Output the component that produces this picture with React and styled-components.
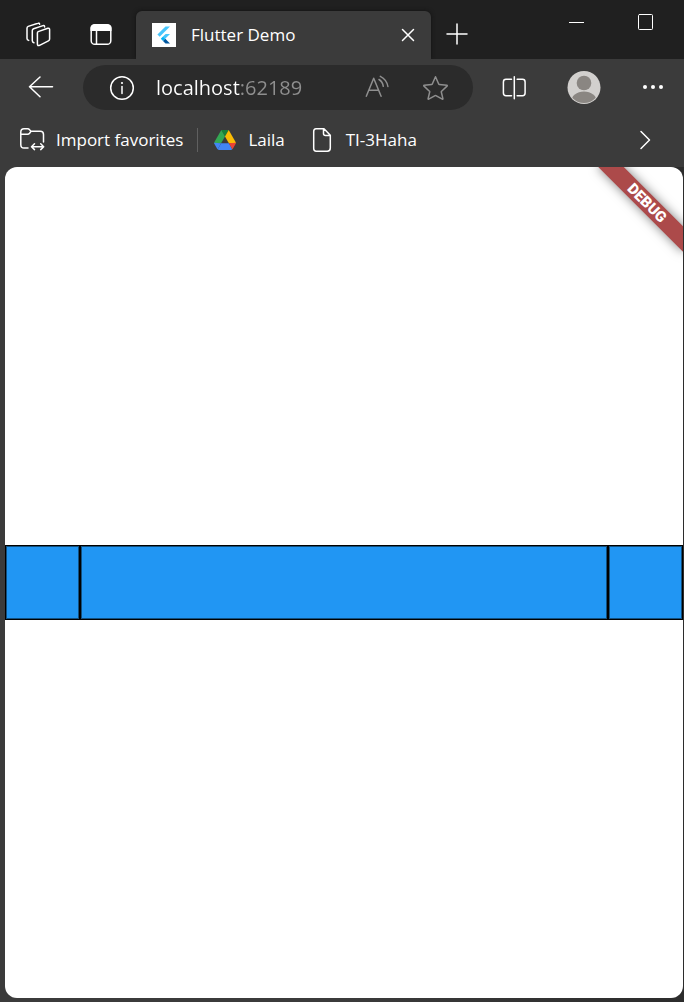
import React from "react";
import styled, { createGlobalStyle } from "styled-components";

const GlobalStyle = createGlobalStyle`
  * { box-sizing: border-box; }
  body {
    margin: 0;
    background: #3b3b3b;
    color: #fff;
    font-family: "Open Sans", "Noto Sans", sans-serif;
    font-size: 17px;
    line-height: 24px;
  }
  button, input { font: inherit; color: inherit; }
`;

const Window = styled.div`
  display: flex;
  flex-direction: column;
  min-height: 100vh;
  overflow: hidden;
`;

const TitleBar = styled.header`
  display: flex;
  align-items: flex-end;
  height: 59px;
  padding: 0 4px 0 12px;
  background: #202020;
`;

const IconButton = styled.button`
  display: flex;
  flex: none;
  align-items: center;
  justify-content: center;
  width: ${(p) => p.$width || 58}px;
  height: ${(p) => p.$height || 44}px;
  padding: 0;
  border: 0;
  background: none;
  color: ${(p) => p.$color || "#fff"};
`;

const TabActions = styled.div`
  display: flex;
  align-items: center;
  gap: 11px;
  width: 124px;
  height: 50px;
`;

const Tab = styled.div`
  position: relative;
  display: flex;
  align-items: center;
  flex: 0 1 295px;
  height: 48px;
  padding: 0 0 0 16px;
  border-radius: 6px 6px 0 0;
  background: #3b3b3b;
  box-shadow: 0 0 4px #111;
  clip-path: inset(-6px -6px 0 -6px);
`;

const TabTitle = styled.span`
  flex: 1;
  padding-left: 15px;
  white-space: nowrap;
`;

const WindowControls = styled.div`
  display: flex;
  align-self: flex-start;
  margin-left: auto;
`;

const Toolbar = styled.nav`
  display: flex;
  align-items: center;
  gap: 12px;
  height: 57px;
  padding: 0 1px 0 13px;
`;

const AddressBar = styled.label`
  display: flex;
  align-items: center;
  flex: 1;
  min-width: 0;
  height: 45px;
  padding: 0 8px 0 10px;
  border-radius: 23px;
  background: #2b2b2b;
`;

const AddressInput = styled.input`
  flex: 1;
  min-width: 0;
  height: 32px;
  margin-left: 5px;
  padding: 0;
  border: 0;
  outline: 0;
  font-size: 20px;
  color: transparent;
  background: linear-gradient(90deg, #fff 84px, #8f8f8f 84px);
  -webkit-background-clip: text;
  background-clip: text;
`;

const FavoritesBar = styled.nav`
  display: flex;
  align-items: center;
  height: 51px;
  padding: 0 10px 4px 18px;
`;

const Favorite = styled.a`
  display: flex;
  align-items: center;
  gap: ${(p) => p.$gap || 10}px;
  color: #fff;
  text-decoration: none;
  white-space: nowrap;
`;

const Divider = styled.span`
  width: 1px;
  height: 24px;
  margin: 0 16px 0 14px;
  background: #606060;
`;

const Spacer = styled.span`
  flex: ${(p) => (p.$width ? `0 0 ${p.$width}px` : "1")};
`;

const PageFrame = styled.div`
  display: flex;
  flex: 1;
  padding: 0 1px 4px 5px;
  background: linear-gradient(90deg, #3b3b3b 50%, #2c2c2c);
`;

const Page = styled.main`
  position: relative;
  display: flex;
  flex: 1;
  align-items: center;
  overflow: hidden;
  border-radius: 12px;
  background: #fff;
`;

const Strip = styled.div`
  display: flex;
  flex: 1;
`;

const Box = styled.div`
  flex: ${(p) => (p.$grow ? "1" : "0 0 75px")};
  height: 75px;
  border: 1px solid #000;
  background: #2196f3;
  box-shadow: inset 0 0 0 1px #12507f;
`;

const DebugBanner = styled.div`
  position: absolute;
  top: 27px;
  right: -24px;
  width: 120px;
  height: 18px;
  transform: rotate(45deg);
  background: #ac4a4a;
  box-shadow: 0 0 11px rgba(0, 0, 0, 0.5);
  font-family: Roboto, sans-serif;
  font-size: 15px;
  font-weight: 900;
  line-height: 18px;
  text-align: center;
`;

const Icon = ({ w = 28, h = w, sw = 1.5, children }) => (
  <svg
    width={w}
    height={h}
    viewBox={`0 0 ${w} ${h}`}
    fill="none"
    stroke="currentColor"
    strokeWidth={sw}
    strokeLinecap="round"
    strokeLinejoin="round"
    aria-hidden="true"
  >
    {children}
  </svg>
);

const WorkspacesIcon = () => (
  <Icon>
    <path d="M14.2 11.6 23.8 8.3q1.8-.5 1.8 1.2V19q0 1.3-1.2 1.9l-8.8 4.4q-2.2 1-2.2-1.2V12.9q0-1 .8-1.3Z" />
    <path d="M20.6 6.9V6.7q0-1.6-1.6-1.1L9.6 8.8Q8.3 9.3 8.3 10.6V20.8q0 1.6 1.6 2" />
    <path d="M15.6 4.2q-.3-1.4-1.7-.9L4.2 6.4Q3 6.9 3 8.2V18.4q0 1.5 1.7 2" />
  </Icon>
);

const TabMenuIcon = () => (
  <Icon>
    <rect x="4.2" y="4.7" width="19.6" height="19.6" rx="3.6" />
    <path d="M3.5 11V8q0-3.500 3.500-3.500h14q3.500 0 3.500 3.500v3Z" fill="currentColor" stroke="none" />
    <path d="M9.5 11v13" />
  </Icon>
);

const FlutterIcon = () => (
  <svg width="24" height="24" viewBox="0 0 24 24" aria-hidden="true">
    <path fill="#fff" d="M0 0h24v24H0z" />
    <path fill="#47c5fb" d="M13.500 3.500H18L7.700 13.800 5.400 11.600Z" />
    <path fill="#47c5fb" d="M13.600 11H18l-4.800 4.800-2.300-2.300Z" />
    <path fill="#00b5f8" d="m8.800 15.800 2.200-2.300 2.300 2.300-2.300 2.200Z" />
    <path fill="#00569e" d="m11 18 2.300-2.200 4.700 4.700h-4.500Z" />
  </svg>
);

const CloseIcon = () => (
  <Icon w={14}>
    <path d="m1.500 1.500 11 11M12.500 1.500l-11 11" />
  </Icon>
);

const PlusIcon = () => (
  <Icon w={22}>
    <path d="M11 1v20M1 11h20" />
  </Icon>
);

const MinimizeIcon = () => (
  <Icon w={15} h={3} sw={1}>
    <path strokeLinecap="butt" d="M0 1.500h15" />
  </Icon>
);

const MaximizeIcon = () => (
  <Icon w={15} h={16} sw={1}>
    <rect x=".5" y=".5" width="14" height="15" rx="1" />
  </Icon>
);

const BackIcon = () => (
  <Icon w={28} h={24}>
    <path d="M24.500 10.700H1.500M12 1 1.500 10.700 12 20.800" />
  </Icon>
);

const InfoIcon = () => (
  <Icon w={26}>
    <circle cx="13" cy="13" r="11.300" />
    <path d="M13 11.500v7" />
    <circle cx="13" cy="8" r="1.100" fill="currentColor" stroke="none" />
  </Icon>
);

const ReadAloudIcon = () => (
  <Icon w={26}>
    <path d="m1.300 21.300 7.400-18 7.400 18M4 15.300h9.500" />
    <path d="M14 4.500q3.600 2.200 4.300 6.800M15.300 1.300q6.500 3.200 7.600 10.200" />
  </Icon>
);

const StarIcon = () => (
  <Icon w={26}>
    <path d="m12.500 1.800 3.200 7.200q.2.500.7.500l7.400.8q.8.200.2.800l-5.400 5.100q-.4.400-.3.800l1.600 6.700q.1.800-.6.400l-6.400-3.500q-.4-.2-.8 0l-6.400 3.500q-.7.400-.6-.4l1.600-6.700q.1-.5-.3-.8l-5.400-5.100q-.6-.6.2-.8l7.400-.8q.5 0 .7-.5Z" />
  </Icon>
);

const SplitIcon = () => (
  <Icon w={24}>
    <path d="M9.500 3.300H4Q1.400 3.300 1.400 5.900v11.200q0 2.600 2.600 2.600h5.500M15.100 3.300h5.400q2.600 0 2.600 2.600v11.200q0 2.600-2.600 2.600h-5.400M12.300 .8v22" />
  </Icon>
);

const AvatarIcon = () => (
  <svg width="34" height="34" viewBox="0 0 34 34" aria-hidden="true">
    <clipPath id="avatar-clip">
      <circle cx="17" cy="16.500" r="15.500" />
    </clipPath>
    <circle cx="17" cy="16.500" r="16.500" fill="#d2d0ce" />
    <g fill="#8a8682" clipPath="url(#avatar-clip)">
      <circle cx="17" cy="12" r="7.300" />
      <ellipse cx="17" cy="31" rx="13" ry="10.500" />
    </g>
  </svg>
);

const MoreIcon = () => (
  <Icon w={22} h={8}>
    <g fill="currentColor" stroke="none">
      <circle cx="2" cy="3" r="2" />
      <circle cx="10" cy="3" r="2" />
      <circle cx="18" cy="3" r="2" />
    </g>
  </Icon>
);

const ImportIcon = () => (
  <Icon>
    <path d="M10 22H6q-3.200 0-3.200-3.200V6q0-3.200 3.200-3.200h3.600q1.200 0 2 1l1.400 1.500h9.300q3.200 0 3.200 3.200V16M2.800 8.300h6.800q1.200 0 2-1l1.400-2" />
    <path d="M14 20.700h11M16.500 17.800l-3 2.900 3 2.900M22.700 17.800l3 2.900-3 2.900" />
  </Icon>
);

const DriveIcon = () => (
  <svg width="22" height="20" viewBox="0 0 22 20" aria-hidden="true">
    <path fill="#188038" d="M7.300 0h7.400L11 6.400Z" />
    <path fill="#34a853" d="M7.300 0 0 12.800l3.500.4h3.600L11 6.400Z" />
    <path fill="#fbbc04" d="M14.700 0 22 12.800l-3.500.8-3.600-.4L11 6.400Z" />
    <path fill="#4285f4" d="M7.100 13.200h7.800l3.400 6q-.5.800-1.500.8H5.200q-1 0-1.500-.8Z" />
    <path fill="#4285f4" d="M0 12.800q0 .5.300 1L3 18.600q.3.500.7.700l3.400-6.100Z" />
    <path fill="#ea4335" d="M22 12.800q0 .5-.3 1L19 18.600q-.3.500-.7.700l-3.400-6.100Z" />
  </svg>
);

const FileIcon = () => (
  <Icon w={20} h={26}>
    <path d="M4 1.800h8l6.300 6.400V21q0 3.200-3 3.200H4.200Q1.700 24.200 1.700 21.500v-17Q1.700 1.800 4 1.800ZM11.500 2v4.500q0 2 2 2H18" />
  </Icon>
);

const ChevronIcon = () => (
  <Icon w={12} h={20}>
    <path d="m2 1.500 8.500 8.500L2 18.500" />
  </Icon>
);

export default function App() {
  return (
    <Window>
      <GlobalStyle />
      <TitleBar>
        <TabActions>
          <IconButton $width={52} aria-label="Workspaces"><WorkspacesIcon /></IconButton>
          <IconButton $width={52} aria-label="Tab actions menu"><TabMenuIcon /></IconButton>
        </TabActions>
        <Tab>
          <FlutterIcon />
          <TabTitle>Flutter Demo</TabTitle>
          <IconButton $width={47} aria-label="Close tab"><CloseIcon /></IconButton>
        </Tab>
        <IconButton $width={52} $height={50} aria-label="New tab"><PlusIcon /></IconButton>
        <WindowControls>
          <IconButton $width={69} aria-label="Minimize"><MinimizeIcon /></IconButton>
          <IconButton $width={69} aria-label="Maximize"><MaximizeIcon /></IconButton>
        </WindowControls>
      </TitleBar>

      <Toolbar aria-label="Navigation">
        <IconButton aria-label="Back"><BackIcon /></IconButton>
        <AddressBar>
          <IconButton as="span"><InfoIcon /></IconButton>
          <AddressInput aria-label="Address" defaultValue="localhost:62189" />
          <IconButton $color="#8f8f8f" aria-label="Read aloud"><ReadAloudIcon /></IconButton>
          <IconButton $color="#8f8f8f" aria-label="Add to favorites"><StarIcon /></IconButton>
        </AddressBar>
        <IconButton aria-label="Split screen"><SplitIcon /></IconButton>
        <IconButton aria-label="Profile"><AvatarIcon /></IconButton>
        <IconButton aria-label="Settings and more"><MoreIcon /></IconButton>
      </Toolbar>

      <FavoritesBar aria-label="Favorites">
        <Favorite href="#import"><ImportIcon />Import favorites</Favorite>
        <Divider />
        <Favorite href="#laila" $gap={12}><DriveIcon />Laila</Favorite>
        <Spacer $width={27} />
        <Favorite href="#ti-3haha" $gap={14}><FileIcon />TI-3Haha</Favorite>
        <Spacer />
        <IconButton aria-label="More favorites"><ChevronIcon /></IconButton>
      </FavoritesBar>

      <PageFrame>
        <Page>
          <Strip>
            <Box />
            <Box $grow />
            <Box />
          </Strip>
          <DebugBanner>DEBUG</DebugBanner>
        </Page>
      </PageFrame>
    </Window>
  );
}
